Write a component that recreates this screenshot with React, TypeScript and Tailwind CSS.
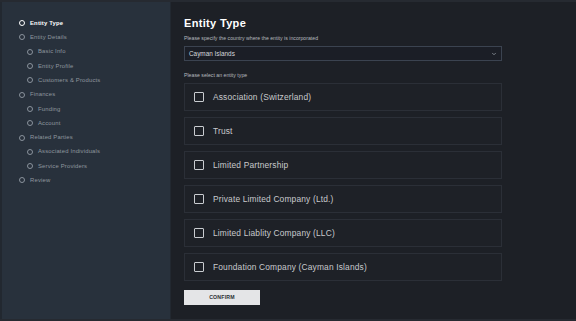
import { ChevronDown } from "lucide-react"

const steps = [
  { label: "Entity Type", level: 0, active: true },
  { label: "Entity Details", level: 0 },
  { label: "Basic Info", level: 1 },
  { label: "Entity Profile", level: 1 },
  { label: "Customers & Products", level: 1 },
  { label: "Finances", level: 0 },
  { label: "Funding", level: 1 },
  { label: "Account", level: 1 },
  { label: "Related Parties", level: 0 },
  { label: "Associated Individuals", level: 1 },
  { label: "Service Providers", level: 1 },
  { label: "Review", level: 0 },
]

const entityTypes = [
  "Association (Switzerland)",
  "Trust",
  "Limited Partnership",
  "Private Limited Company (Ltd.)",
  "Limited Liablity Company (LLC)",
  "Foundation Company (Cayman Islands)",
]

export default function App() {
  return (
    <div
      className="flex h-[321px] w-[576px] overflow-hidden bg-[#1d2026] border-y-2 border-[#262a31]"
      style={{ fontFamily: '"Liberation Sans", Arial, sans-serif' }}
    >
      <aside className="w-[171px] shrink-0 bg-[#28313c] border-l-2 border-r border-[#222830] pt-[14px] pl-[17px]">
        {steps.map(s => (
          <div
            key={s.label}
            className={`flex items-center h-[14.3px] ${s.level ? "pl-[8px]" : ""}`}
          >
            <span
              className={`w-[6px] h-[6px] rounded-full border ${s.active ? "border-white" : "border-[#8a929c]"}`}
            />
            <span
              className={`ml-[5px] text-[5.9px] tracking-[0.03em] ${s.active ? "text-white font-bold" : "text-[#8f979f]"}`}
            >
              {s.label}
            </span>
          </div>
        ))}
      </aside>

      <main className="flex-1 pl-[13px] pt-[12px]">
        <h1 className="text-[11px] font-bold text-white leading-[18px] tracking-[0.03em]">
          Entity Type
        </h1>
        <p className="mt-[2px] text-[5.2px] text-[#b4b8be] leading-[8px]">
          Please specify the country where the entity is incorporated
        </p>
        <div className="mt-[4px] w-[318px] h-[15px] flex items-center justify-between bg-[#1b1e26] border border-[#3b4350] px-[4px]">
          <span className="text-[6.4px] text-[#d6d8dc]">Cayman Islands</span>
          <ChevronDown className="w-[6px] h-[6px] text-[#9aa0a8]" strokeWidth={3} />
        </div>
        <p className="mt-[10px] text-[5.2px] text-[#b4b8be] leading-[8px]">
          Please select an entity type
        </p>
        <div className="mt-[4px] flex flex-col gap-[6px] w-[318px]">
          {entityTypes.map(t => (
            <div
              key={t}
              className="h-[28px] flex items-center pl-[9px] border border-[#2b2f37] bg-[#1e2127]"
            >
              <span className="w-[10px] h-[10px] border-[1.5px] border-[#c9ccd0] rounded-[1px]" />
              <span className="ml-[9px] text-[8.4px] text-[#c8cacd] tracking-[0.02em]">{t}</span>
            </div>
          ))}
        </div>
        <button className="mt-[9px] w-[76px] h-[15px] bg-[#e4e5e7] text-[5.2px] font-bold text-[#2a2d33] tracking-[0.04em] flex items-center justify-center">
          CONFIRM
        </button>
      </main>
    </div>
  )
}
